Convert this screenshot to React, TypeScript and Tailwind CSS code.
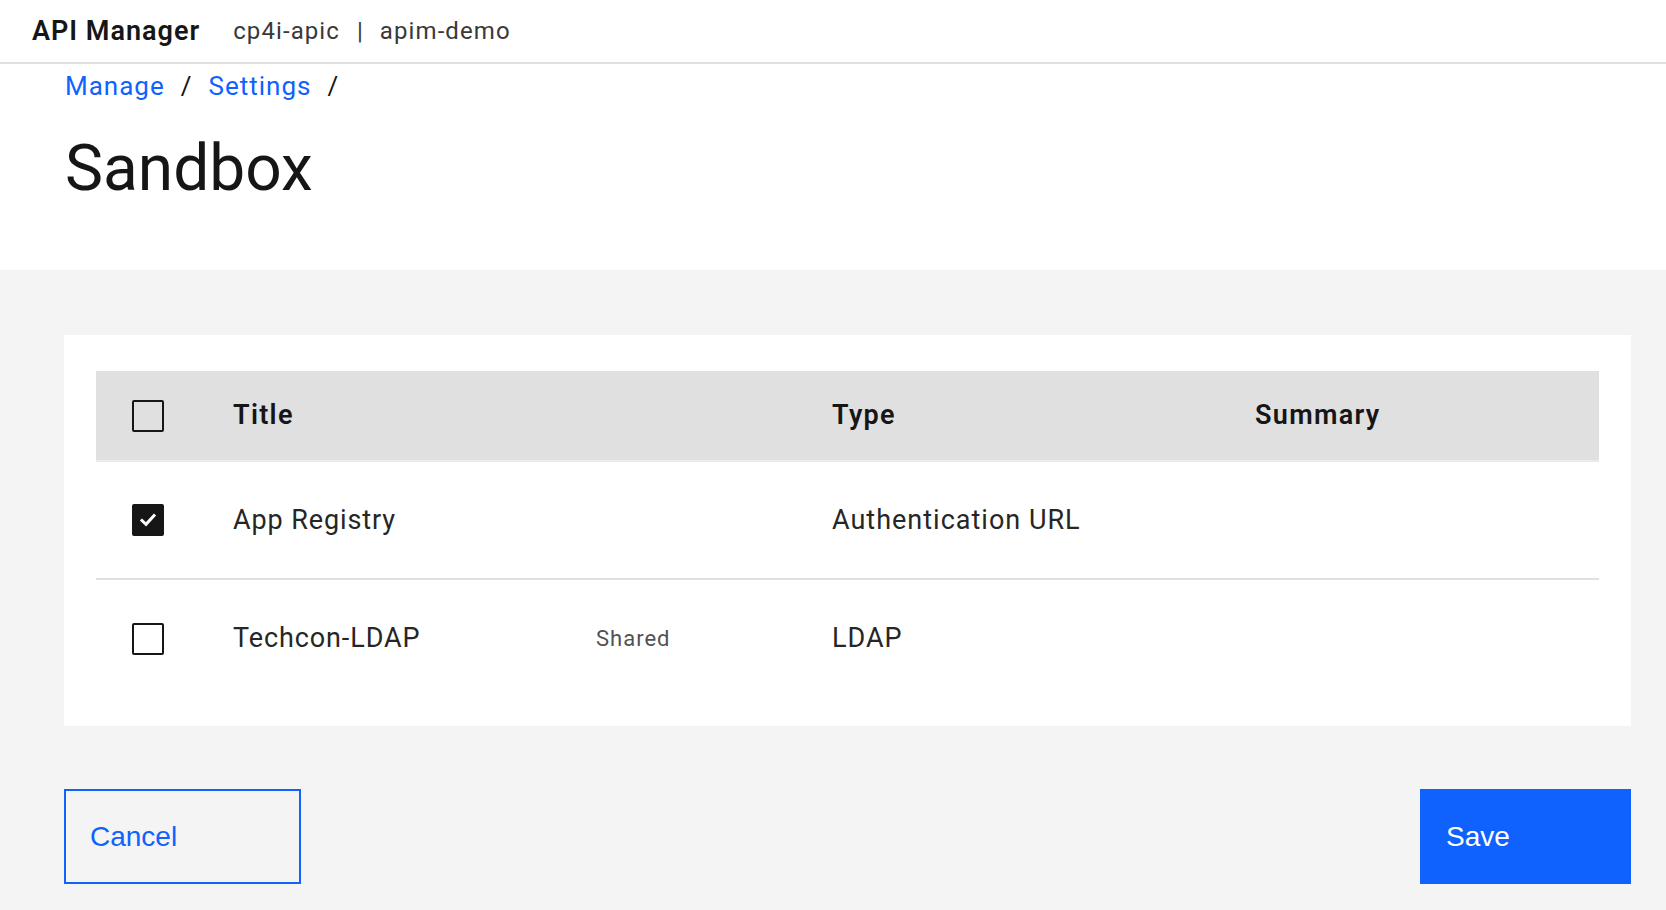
import React from 'react';

const plex = { fontFamily: 'Roboto, "Noto Sans", sans-serif' };

const Checkbox = ({ checked = false }: { checked?: boolean }) => (
    <div
        className={
            checked
                ? "w-[32px] h-[32px] rounded-[2px] bg-[#161616] border-2 border-[#161616] flex items-center justify-center"
                : "w-[32px] h-[32px] rounded-[2px] bg-transparent border-2 border-[#161616]"
        }
    >
        {checked && (
            <svg width="20" height="20" viewBox="0 0 16 16" fill="none">
                <path d="M3.2 8.4 L6.4 11.4 L12.8 4.4" stroke="#ffffff" strokeWidth="2.4" strokeLinecap="square" />
            </svg>
        )}
    </div>
);

const rows = [
    { title: 'App Registry', tag: '', type: 'Authentication URL', checked: true },
    { title: 'Techcon-LDAP', tag: 'Shared', type: 'LDAP', checked: false },
];

export default function App() {
    return (
        <div className="w-[1666px] h-[910px] flex flex-col bg-[#f4f4f4] text-[#161616] overflow-hidden" style={plex}>
            {/* Top bar */}
            <div className="h-[64px] shrink-0 flex items-center px-[32px] bg-white border-b-2 border-[#e0e0e0]">
                <span className="text-[27px] font-semibold tracking-[1px]">API Manager</span>
                <span className="ml-[33px] text-[24px] text-[#393939] tracking-[1.1px]">cp4i-apic</span>
                <span className="mx-[17px] text-[24px] text-[#393939]">|</span>
                <span className="text-[24px] text-[#393939] tracking-[1.1px]">apim-demo</span>
            </div>

            {/* Page header */}
            <div className="bg-white px-[65px] pt-[5px] pb-[61px] shrink-0">
                <div className="flex items-center h-[34px] text-[26px] tracking-[1px]">
                    <span className="text-[#0f62fe]">Manage</span>
                    <span className="mx-[16px]">/</span>
                    <span className="text-[#0f62fe]">Settings</span>
                    <span className="mx-[16px]">/</span>
                </div>
                <h1 className="mt-[26px] h-[80px] flex items-center text-[64px] font-normal leading-none">Sandbox</h1>
            </div>

            {/* Content */}
            <div className="flex-1 pl-[64px] pr-[35px] pt-[65px]">
                <div className="bg-white px-[32px] pt-[36px] pb-[29px]">
                    <div className="grid grid-cols-[137px_363px_236px_423px_1fr] h-[91px] items-center bg-[#e0e0e0] border-b-2 border-[#ebebeb] text-[27px] font-semibold tracking-[1.3px]">
                        <div className="pl-[36px]"><Checkbox /></div>
                        <div>Title</div>
                        <div />
                        <div>Type</div>
                        <div>Summary</div>
                    </div>
                    {rows.map((r, i) => (
                        <div
                            key={r.title}
                            className={
                                i === 0
                                    ? "grid grid-cols-[137px_363px_236px_423px_1fr] h-[118px] items-center border-b-2 border-[#e0e0e0] text-[27px]"
                                    : "grid grid-cols-[137px_363px_236px_423px_1fr] h-[117px] items-center text-[27px]"
                            }
                        >
                            <div className="pl-[36px]"><Checkbox checked={r.checked} /></div>
                            <div className="text-[#262626] tracking-[0.9px]">{r.title}</div>
                            <div className="text-[22px] text-[#525252] tracking-[1px]">{r.tag}</div>
                            <div className="text-[#262626] tracking-[1px]">{r.type}</div>
                            <div />
                        </div>
                    ))}
                </div>

                <div className="mt-[63px] flex justify-between" style={{ fontFamily: '"Liberation Sans", Arial, sans-serif' }}>
                    <button className="w-[237px] h-[95px] border-2 border-[#0f62fe] text-[#0f62fe] text-[28px] text-left pl-[24px]">
                        Cancel
                    </button>
                    <button className="w-[211px] h-[95px] bg-[#0f62fe] text-white text-[28px] text-left pl-[26px]">
                        Save
                    </button>
                </div>
            </div>
        </div>
    );
}
